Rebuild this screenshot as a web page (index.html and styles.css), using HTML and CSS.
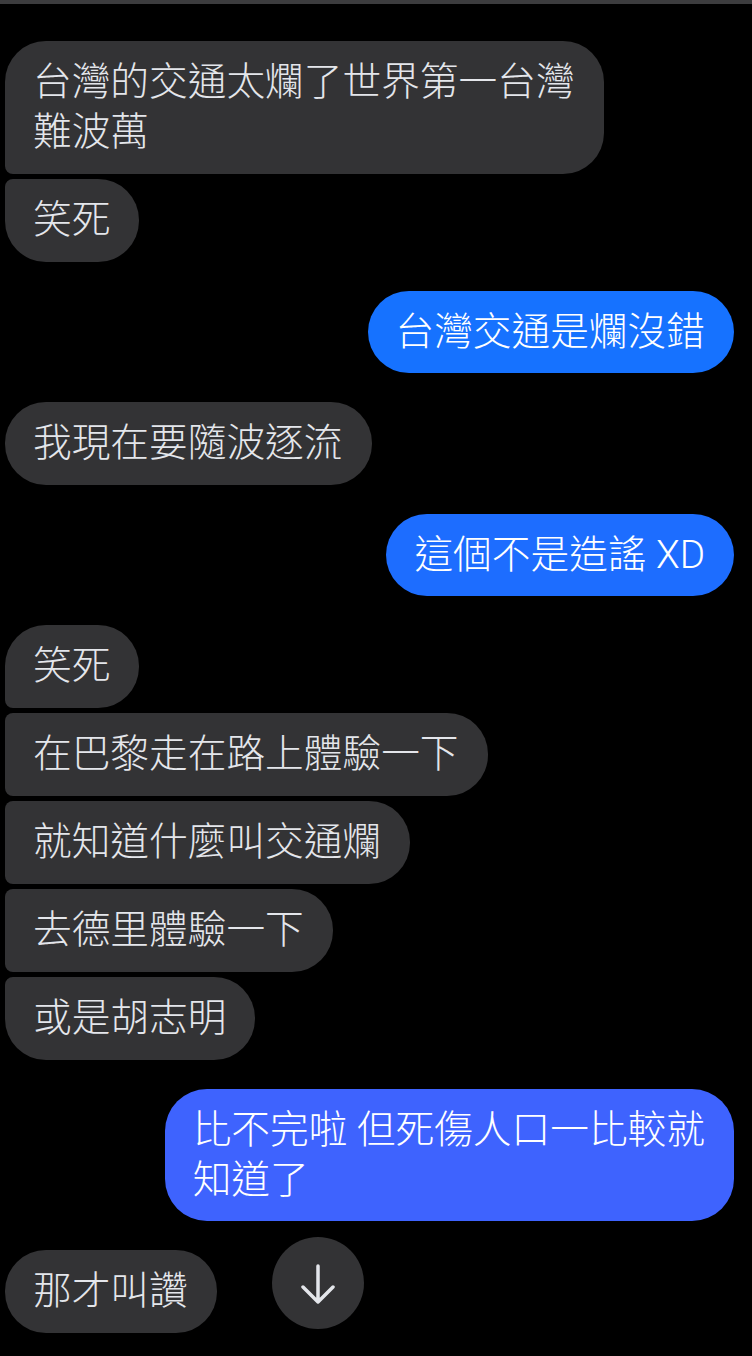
FILE: index.html
```html
<!DOCTYPE html>
<html>
<head>
<meta charset="utf-8">
<title>聊天</title>
<link rel="stylesheet" href="styles.css">
</head>
<body>
    <div class="topbar"></div>

    <div class="chat">
        <div class="group in">
            <div class="msg first">台灣的交通太爛了世界第一台灣<br>難波萬</div>
            <div class="msg last">笑死</div>
        </div>

        <div class="group out">
            <div class="msg solo blue1">台灣交通是爛沒錯</div>
        </div>

        <div class="group in">
            <div class="msg solo">我現在要隨波逐流</div>
        </div>

        <div class="group out">
            <div class="msg solo blue2">這個不是造謠 XD</div>
        </div>

        <div class="group in">
            <div class="msg first">笑死</div>
            <div class="msg mid">在巴黎走在路上體驗一下</div>
            <div class="msg mid">就知道什麼叫交通爛</div>
            <div class="msg mid">去德里體驗一下</div>
            <div class="msg last">或是胡志明</div>
        </div>

        <div class="group out">
            <div class="msg solo wide blue3">比不完啦 但死傷人口一比較就<br>知道了</div>
        </div>

        <div class="group in lastrow">
            <div class="msg solo">那才叫讚</div>
            <a href="javascript:;" class="scroll-down">
                <svg width="92" height="92" viewBox="0 0 92 92">
                    <path d="M46 29 V65 M31 50 L46 65 L61 50" fill="none" stroke="#e4e6eb" stroke-width="3.5" stroke-linecap="round" stroke-linejoin="round"/>
                </svg>
            </a>
        </div>
    </div>
</body>
</html>
```

FILE: styles.css
```css
* {
    margin: 0;
    padding: 0;
    box-sizing: border-box;
}

body {
    background: #000;
    font-family: "Roboto", "Noto Sans CJK TC", sans-serif;
    width: 752px;
    height: 1356px;
    overflow: hidden;
}

.topbar {
    height: 4px;
    background: #3c3c3e;
}

.chat {
    padding: 37px 18px 0 5px;
    display: flex;
    flex-direction: column;
    gap: 29px;
}

.group {
    display: flex;
    flex-direction: column;
    gap: 5.5px;
}

.group.in {
    align-items: flex-start;
}

.group.out {
    align-items: flex-end;
}

.msg {
    font-size: 38.7px;
    font-weight: 300;
    line-height: 50px;
    padding: 16px 29px 16.5px 28px;
    background: #333335;
    color: #e4e6eb;
    border-radius: 41px;
    white-space: nowrap;
}

.in .first {
    border-radius: 41px 41px 41px 8px;
}

.in .mid {
    border-radius: 8px 41px 41px 8px;
}

.in .last {
    border-radius: 8px 41px 41px 41px;
}

.out .msg {
    color: #fff;
}

.blue1 {
    background: #1672ff;
}

.blue2 {
    background: #1d6dff;
}

.blue3 {
    background: #3e63fe;
}

.wide {
    border-radius: 42px;
}

.lastrow {
    position: relative;
}

.scroll-down {
    position: absolute;
    left: 267px;
    top: -13px;
    width: 92px;
    height: 92px;
    border-radius: 50%;
    background: #333335;
    display: block;
}

.scroll-down svg {
    display: block;
}
```
